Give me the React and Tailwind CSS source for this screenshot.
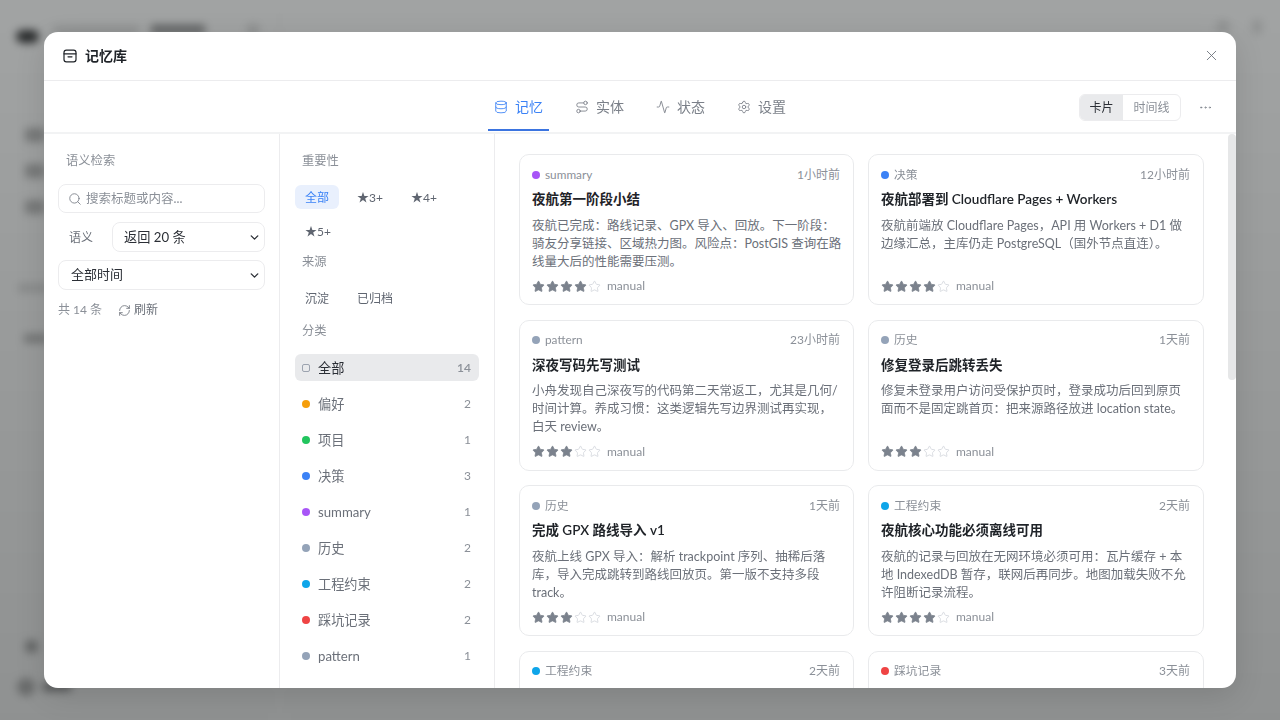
import React from "react";
import { X, Database, Route, Activity, Settings, MoreHorizontal, Search, ChevronDown, RefreshCw, Star } from "lucide-react";

const FONT = "font-['Lato','Noto_Sans_CJK_SC',sans-serif]";

const cats = [
  ["偏好", "bg-[#f59e0b]", 2],
  ["项目", "bg-[#22c55e]", 1],
  ["决策", "bg-[#3b82f6]", 3],
  ["summary", "bg-[#a855f7]", 1],
  ["历史", "bg-[#94a3b8]", 2],
  ["工程约束", "bg-[#0ea5e9]", 2],
  ["踩坑记录", "bg-[#ef4444]", 2],
  ["pattern", "bg-[#94a3b8]", 1],
];

const cards = [
  ["summary", "bg-[#a855f7]", "1小时前", "夜航第一阶段小结", "夜航已完成：路线记录、GPX 导入、回放。下一阶段：\n骑友分享链接、区域热力图。风险点：PostGIS 查询在路\n线量大后的性能需要压测。", 4],
  ["决策", "bg-[#3b82f6]", "12小时前", "夜航部署到 Cloudflare Pages + Workers", "夜航前端放 Cloudflare Pages，API 用 Workers + D1 做\n边缘汇总，主库仍走 PostgreSQL（国外节点直连）。", 4],
  ["pattern", "bg-[#94a3b8]", "23小时前", "深夜写码先写测试", "小舟发现自己深夜写的代码第二天常返工，尤其是几何/\n时间计算。养成习惯：这类逻辑先写边界测试再实现，\n白天 review。", 3],
  ["历史", "bg-[#94a3b8]", "1天前", "修复登录后跳转丢失", "修复未登录用户访问受保护页时，登录成功后回到原页\n面而不是固定跳首页：把来源路径放进 location state。", 3],
  ["历史", "bg-[#94a3b8]", "1天前", "完成 GPX 路线导入 v1", "夜航上线 GPX 导入：解析 trackpoint 序列、抽稀后落\n库，导入完成跳转到路线回放页。第一版不支持多段\ntrack。", 3],
  ["工程约束", "bg-[#0ea5e9]", "2天前", "夜航核心功能必须离线可用", "夜航的记录与回放在无网环境必须可用：瓦片缓存 + 本\n地 IndexedDB 暂存，联网后再同步。地图加载失败不允\n许阻断记录流程。", 4],
  ["工程约束", "bg-[#0ea5e9]", "2天前", "", "", 0],
  ["踩坑记录", "bg-[#ef4444]", "3天前", "", "", 0],
];

function Stars({ n }) {
  return (
    <div className="flex gap-[1px]">
      {[0, 1, 2, 3, 4].map((i) =>
        i < n ? (
          <Star key={i} size={13} className="text-[#7b828d] fill-[#7b828d]" strokeWidth={1.5} />
        ) : (
          <Star key={i} size={13} className="text-[#d1d5db]" strokeWidth={1.5} />
        )
      )}
    </div>
  );
}

function Card({ c }) {
  return (
    <div className="h-[151px] rounded-[10px] border border-[#e9eaec] bg-white pl-[12px] pr-[13px] pt-[11px] shrink-0">
      <div className="flex items-center justify-between h-[17px]">
        <div className="flex items-center gap-[5px] text-[11.8px] text-[#8b9098]">
          <span className={`w-[8px] h-[8px] rounded-full ${c[1]}`} />
          {c[0]}
        </div>
        <span className="text-[12px] text-[#8b9098]">{c[2]}</span>
      </div>
      {c[3] && (
        <>
          <div className="mt-[6px] text-[13.5px] leading-[20px] font-semibold text-[#1f2328] truncate">{c[3]}</div>
          <p className="mt-[7.5px] h-[54px] text-[12.5px] leading-[18px] text-[#6b7079] whitespace-pre">{c[4]}</p>
          <div className="mt-[6.5px] flex items-center gap-[6px]">
            <Stars n={c[5]} />
            <span className="text-[12px] text-[#8b9098]">manual</span>
          </div>
        </>
      )}
    </div>
  );
}

function Tab({ icon: Icon, label, active }) {
  return (
    <div className={`relative h-[52px] w-[61px] flex items-center justify-center gap-[7px] text-[14px] ${active ? "text-[#3b82f6]" : "text-[#7b8089]"}`}>
      <Icon size={14} strokeWidth={1.5} />
      <span>{label}</span>
      {active && <span className="absolute left-0 right-0 bottom-[2px] h-[2px] bg-[#3b74e0]" />}
    </div>
  );
}

function Chip({ children, active }) {
  return (
    <span className={`h-[24px] px-[10px] pt-[2px] flex items-center rounded-[6px] text-[12px] ${active ? "bg-[#e9f0fd] text-[#3b82f6]" : "text-[#5f6570]"}`}>
      {children}
    </span>
  );
}

function Label({ children, className = "" }) {
  return <div className={`text-[12.3px] leading-[17px] text-[#8b9098] ${className}`}>{children}</div>;
}

function Background() {
  return (
    <div className="fixed -inset-[20px] flex blur-[4px] bg-gradient-to-b from-[#a2a4a4] to-[#8f9191]">
      <div className="w-[300px] h-full border-r border-[#9a9c9c] flex flex-col pl-[36px] pt-[44px] pb-[44px]">
        <div className="flex items-start">
          <span className="mt-[6px] w-[23px] h-[13px] rounded-full bg-[#2a2c2d]" />
          <span className="mt-[2px] ml-[14px] w-[86px] h-[8px] bg-[#8d8f8f]" />
          <span className="ml-[12px] mt-[1px] w-[54px] h-[9px] bg-[#5f6162]" />
          <span className="ml-[42px] w-[12px] h-[12px] rounded-[3px] bg-[#8d8f8f]" />
        </div>
        <span className="mt-[85px] ml-[9px] w-[20px] h-[14px] rounded-[3px] bg-[#767878]" />
        <span className="mt-[22px] ml-[9px] w-[20px] h-[14px] rounded-[3px] bg-[#767878]" />
        <span className="mt-[22px] ml-[9px] w-[20px] h-[14px] rounded-[3px] bg-[#767878]" />
        <span className="mt-[70px] ml-[2px] w-[30px] h-[8px] bg-[#868888]" />
        <span className="mt-[42px] ml-[8px] w-[24px] h-[9px] bg-[#727474]" />
        <div className="flex-1" />
        <span className="ml-[9px] w-[13px] h-[13px] rounded-full bg-[#606262]" />
        <div className="mt-[25px] flex items-center">
          <span className="ml-[1px] w-[18px] h-[18px] rounded-full bg-[#686a6a]" />
          <span className="ml-[8px] w-[28px] h-[8px] bg-[#525455]" />
        </div>
      </div>
      <div className="flex-1 flex justify-end pt-[40px] pr-[38px] gap-[22px]">
        <span className="w-[14px] h-[14px] rounded-full bg-[#8f9191]" />
        <span className="w-[10px] h-[14px] bg-[#8f9191]" />
      </div>
    </div>
  );
}

export default function App() {
  return (
    <div className={`${FONT} w-[1280px] h-[720px] relative overflow-hidden`}>
      <Background />
      <div className="fixed inset-0 flex items-center justify-center">
        <div className="w-[1192px] h-[656px] bg-white rounded-[14px] overflow-hidden flex flex-col shadow-[0_8px_30px_rgba(0,0,0,0.12)]">
          <header className="h-[49px] shrink-0 border-b border-[#ececee] flex items-center justify-between pl-[19px] pr-[16px] pb-[1px]">
            <div className="flex items-center gap-[8px] text-[#1f2328]">
              <svg width="14" height="14" viewBox="0 0 14 14" fill="none" stroke="currentColor" strokeWidth="1.2" strokeLinecap="round">
                <rect x="1" y="1.2" width="12" height="11.6" rx="2.4" />
                <path d="M1 4.8h12" />
                <path d="M5 7.8h4" />
              </svg>
              <span className="text-[14px] font-semibold">记忆库</span>
            </div>
            <X size={17} strokeWidth={1.25} className="text-[#6b7079]" />
          </header>
          <div className="h-[53px] shrink-0 border-b-2 border-[#f2f3f4] flex items-center relative">
            <div className="flex-1 flex justify-center gap-[20px]">
              <Tab icon={Database} label="记忆" active />
              <Tab icon={Route} label="实体" />
              <Tab icon={Activity} label="状态" />
              <Tab icon={Settings} label="设置" />
            </div>
            <div className="absolute right-[23px] top-[13px] flex items-center gap-[17px]">
              <div className="flex h-[27px] w-[102px] rounded-[6px] border border-[#ececee] overflow-hidden text-[12px]">
                <span className="w-[43px] flex items-center justify-center bg-[#e9eaec] text-[#2b2f36]">卡片</span>
                <span className="flex-1 flex items-center justify-center text-[#8b9098]">时间线</span>
              </div>
              <MoreHorizontal size={15} strokeWidth={1.25} className="text-[#7b8089]" />
            </div>
          </div>
          <div className="flex-1 flex min-h-0">
            <aside className="w-[236px] shrink-0 border-r border-[#ececee] pt-[18px] px-[14px]">
              <Label className="pl-[8px]">语义检索</Label>
              <div className="mt-[15px] h-[29px] w-[207px] rounded-[8px] border border-[#ececee] flex items-center gap-[4px] pl-[9px] text-[12.5px] text-[#8b9098]">
                <Search size={14} strokeWidth={1.5} className="text-[#7b8089]" />
                <span className="pt-[1px]">搜索标题或内容...</span>
              </div>
              <div className="mt-[9px] flex items-center">
                <span className="w-[54px] pl-[11px] pt-[1px] text-[12px] text-[#6b7079]">语义</span>
                <div className="w-[153px] h-[30px] rounded-[8px] border border-[#ececee] flex items-center justify-between pl-[11px] pr-[3px] text-[13.2px] text-[#2b2f36]">
                  <span className="pt-[1px]">返回 20 条</span>
                  <ChevronDown size={13} strokeWidth={2.5} className="text-[#2b2f36]" />
                </div>
              </div>
              <div className="mt-[8px] w-[207px] h-[30px] rounded-[8px] border border-[#ececee] flex items-center justify-between pl-[12px] pr-[3px] text-[13px] text-[#2b2f36]">
                <span>全部时间</span>
                <ChevronDown size={13} strokeWidth={2.5} className="text-[#2b2f36]" />
              </div>
              <div className="mt-[11px] flex items-center text-[12px] text-[#8b9098]">
                <span className="w-[60px]">共 14 条</span>
                <RefreshCw size={13} strokeWidth={1.5} className="text-[#6b7079] mr-[3px]" />
                <span className="text-[#6b7079]">刷新</span>
              </div>
            </aside>
            <aside className="w-[215px] shrink-0 border-r border-[#ececee] pt-[18px] pl-[15px] pr-[15px]">
              <Label className="pl-[7px]">重要性</Label>
              <div className="mt-[16px] flex flex-wrap gap-x-[8px] gap-y-[10px]">
                <Chip active>全部</Chip>
                <Chip>★3+</Chip>
                <Chip>★4+</Chip>
                <Chip>★5+</Chip>
              </div>
              <Label className="pl-[7px] mt-[10px]">来源</Label>
              <div className="mt-[16px] flex gap-x-[8px]">
                <Chip>沉淀</Chip>
                <Chip>已归档</Chip>
              </div>
              <Label className="pl-[7px] mt-[12px]">分类</Label>
              <div className="mt-[15px] flex flex-col gap-[9px]">
                <div className="h-[27px] rounded-[6px] bg-[#e9eaec] flex items-center pl-[7px] pr-[8px] text-[13.2px] text-[#2b2f36]">
                  <span className="w-[8px] h-[8px] rounded-[2px] border border-[#9ca3af] mr-[8px]" />
                  <span className="flex-1 pt-[2px]">全部</span>
                  <span className="text-[12px] font-semibold text-[#8b9098]">14</span>
                </div>
                {cats.map(([name, color, n]) => (
                  <div key={name} className="h-[27px] flex items-center pl-[7px] pr-[8px] text-[13.2px] text-[#6b7079]">
                    <span className={`w-[8px] h-[8px] rounded-full mr-[8px] ${color}`} />
                    <span className="flex-1 pt-[2px]">{name}</span>
                    <span className="text-[12px] text-[#8b9098]">{n}</span>
                  </div>
                ))}
              </div>
            </aside>
            <main className="flex-1 min-w-0 flex">
              <div className="flex-1 min-w-0 overflow-hidden px-[24px] pt-[20px]">
                <div className="grid grid-cols-[335px_336px] gap-x-[14px] gap-y-[14.6px]">
                  {cards.map((c, i) => <Card key={i} c={c} />)}
                </div>
              </div>
              <div className="w-[8px] shrink-0">
                <div className="h-[246px] rounded-full bg-[#e6e7e8]" />
              </div>
            </main>
          </div>
        </div>
      </div>
    </div>
  );
}
